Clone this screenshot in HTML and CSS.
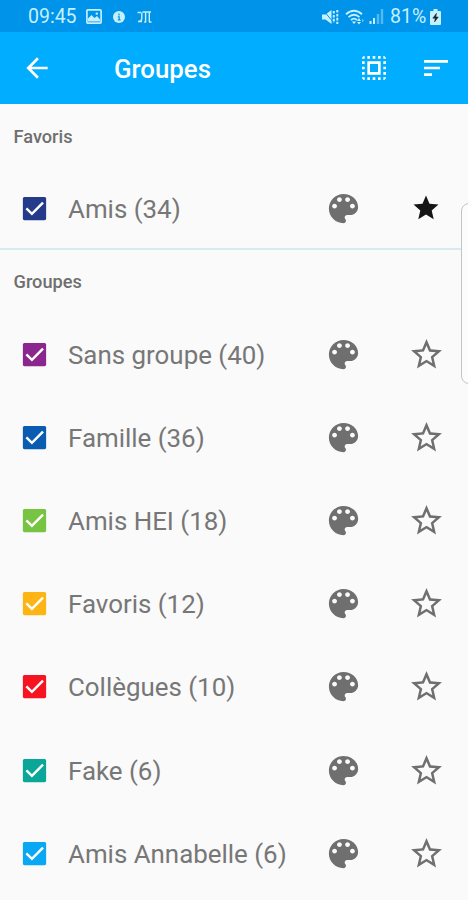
FILE: index.html
```html
<!DOCTYPE html>
<html lang="fr">
<head>
  <meta charset="UTF-8" />
  <meta name="viewport" content="width=device-width, initial-scale=1" />
  <title>Groupes</title>
  <link rel="stylesheet" href="styles.css">
</head>
<body>

  <!-- Shared icons -->
  <svg class="sprite" aria-hidden="true">
    <symbol id="check" viewBox="0 0 24 24">
      <rect x="3" y="3" width="18" height="18" rx="1.2" fill="currentColor" />
      <path d="M5.7 11.9l4.3 4.2 8.6-8.7" fill="none" stroke="#fff" stroke-width="1.9" />
    </symbol>
    <symbol id="palette" viewBox="0 0 24 24">
      <path fill="currentColor" d="M12 3c-4.97 0-9 4.03-9 9s4.03 9 9 9c.83 0 1.5-.67 1.5-1.5 0-.39-.15-.74-.39-1.01-.23-.26-.38-.61-.38-.99 0-.83.67-1.5 1.5-1.5H16c2.76 0 5-2.24 5-5 0-4.42-4.03-8-9-8zm-5.5 9c-.83 0-1.5-.67-1.5-1.5S5.67 9 6.5 9 8 9.67 8 10.5 7.33 12 6.5 12zm3-4C8.67 8 8 7.33 8 6.5S8.67 5 9.5 5s1.5.67 1.5 1.5S10.33 8 9.5 8zm5 0c-.83 0-1.5-.67-1.5-1.5S13.67 5 14.5 5s1.5.67 1.5 1.5S15.33 8 14.5 8zm3 4c-.83 0-1.5-.67-1.5-1.5S16.67 9 17.5 9s1.5.67 1.5 1.5-.67 1.5-1.5 1.5z" />
    </symbol>
    <symbol id="star" viewBox="0 0 24 24">
      <path fill="currentColor" d="M12 17.27L18.18 21l-1.64-7.03L22 9.24l-7.19-.61L12 2 9.19 8.63 2 9.24l5.46 4.73L5.82 21z" />
    </symbol>
    <symbol id="star-border" viewBox="0 0 24 24">
      <path fill="currentColor" d="M22 9.24l-7.19-.62L12 2 9.19 8.63 2 9.24l5.46 4.73L5.82 21 12 17.27 18.18 21l-1.63-7.03L22 9.24zM12 15.4l-3.76 2.27 1-4.28-3.32-2.88 4.38-.38L12 6.1l1.71 4.04 4.38.38-3.32 2.88 1 4.28L12 15.4z" />
    </symbol>
  </svg>

  <header>
    <div class="status-bar">
      <span class="clock">09:45</span>
      <svg class="picture-icon" viewBox="0 0 16 15" width="16" height="15">
        <rect x=".9" y=".9" width="14.2" height="13.2" rx="1" fill="none" stroke="currentColor" stroke-width="1.7" />
        <path d="M2 12.5V9.5L5.5 6l3 3L11 7l3 3.5v2z" fill="currentColor" />
        <circle cx="10.8" cy="4.6" r="1.2" fill="currentColor" />
      </svg>
      <svg class="info-icon" viewBox="0 0 12 12" width="12" height="12">
        <circle cx="6" cy="6" r="6" fill="currentColor" />
        <path d="M6 2.5v2M4.8 5.8h1.4v3M4.8 8.8h2.7" fill="none" stroke="#0093ea" stroke-width="1.2" />
      </svg>
      <svg class="m-icon" viewBox="0 0 15 12" width="15" height="12">
        <path d="M.5 1.5H4M5.5 1H14M4.8 1.5v6q0 3-3.3 3M1 10.5h4M8.6 1.5V11M12.3 1.5V11M7.2 11h2M12 11h2.5" fill="none" stroke="currentColor" stroke-width="1.4" />
      </svg>

      <svg class="mute-icon" viewBox="0 0 17 16" width="17" height="16">
        <path d="M0 5.5h3.5L9.5 1v14l-6-4.5H0z" fill="currentColor" />
        <path d="M1 1l11 13" stroke="#0093ea" stroke-width="1" />
        <path d="M11.8 2v12M15.3 1v14" stroke="currentColor" stroke-width="2" stroke-dasharray="2.6 1.3" />
      </svg>
      <svg class="wifi-icon" viewBox="0 0 20 16" width="20" height="16">
        <path d="M1 5.3q8-7 16 0M3.5 8.2q5.500-5 11 0M6 11q3-2.800 6 0" fill="none" stroke="currentColor" stroke-width="1.8" />
        <path d="M6.8 12.5h4.400L9 15z" fill="currentColor" />
        <path d="M12 12l2-3 2 3zM12 13h4l-2 2.500z" fill="currentColor" />
        <path d="M17 9.500l2 2-2 2z" fill="currentColor" opacity=".5" />
      </svg>
      <svg class="signal-icon" viewBox="0 0 15 15" width="15" height="15">
        <path d="M1.500 12v3M5 9v6" stroke="currentColor" stroke-width="2" />
        <path d="M9 5v10M13 0v15" stroke="currentColor" stroke-width="2.4" opacity=".42" />
      </svg>
      <span class="battery-level">81%</span>
      <svg class="battery-icon" viewBox="0 0 11 16" width="11" height="16">
        <path d="M3.500 0h4v2H10q1 0 1 1v12q0 1-1 1H1q-1 0-1-1V3q0-1 1-1h2.500z" fill="currentColor" />
        <path d="M6.500 4.300L2.800 9.200h2.500l-.8 3.800 3.800-5H5.800z" fill="#123" stroke="#123" stroke-width=".5" />
      </svg>
    </div>

    <div class="toolbar">
      <svg class="back" viewBox="0 0 24 24">
        <path fill="currentColor" d="M20 11H7.830l5.590-5.590L12 4l-8 8 8 8 1.410-1.410L7.830 13H20v-2z" />
      </svg>
      <h1>Groupes</h1>
      <svg class="select-all" viewBox="0 0 24 24">
        <path fill="currentColor" d="M3 5h2V3c-1.100 0-2 .9-2 2zm0 8h2v-2H3v2zm4 8h2v-2H7v2zM3 9h2V7H3v2zm10-6h-2v2h2V3zm6 0v2h2c0-1.100-.9-2-2-2zM5 21v-2H3c0 1.100.9 2 2 2zm-2-4h2v-2H3v2zM9 3H7v2h2V3zm2 18h2v-2h-2v2zm8-8h2v-2h-2v2zm0 8c1.100 0 2-.9 2-2h-2v2zm0-12h2V7h-2v2zm0 8h2v-2h-2v2zm-4 4h2v-2h-2v2zm0-16h2V3h-2v2zM7 17h10V7H7v10zm2-8h6v6H9V9z" />
      </svg>
      <svg class="sort" viewBox="0 0 24 24">
        <path fill="currentColor" d="M3 18h6v-2H3v2zM3 6v2h18V6H3zm0 7h12v-2H3v2z" />
      </svg>
    </div>
  </header>

  <main>
    <section class="favorites">
      <h2>Favoris</h2>
      <div class="row">
        <svg class="check navy"><use href="#check" /></svg>
        <span class="name">Amis (34)</span>
        <svg class="palette"><use href="#palette" /></svg>
        <svg class="star filled"><use href="#star" /></svg>
      </div>
    </section>

    <section class="groups">
      <h2>Groupes</h2>
      <div class="row">
        <svg class="check purple"><use href="#check" /></svg>
        <span class="name">Sans groupe (40)</span>
        <svg class="palette"><use href="#palette" /></svg>
        <svg class="star"><use href="#star-border" /></svg>
      </div>
      <div class="row">
        <svg class="check blue"><use href="#check" /></svg>
        <span class="name">Famille (36)</span>
        <svg class="palette"><use href="#palette" /></svg>
        <svg class="star"><use href="#star-border" /></svg>
      </div>
      <div class="row">
        <svg class="check green"><use href="#check" /></svg>
        <span class="name">Amis HEI (18)</span>
        <svg class="palette"><use href="#palette" /></svg>
        <svg class="star"><use href="#star-border" /></svg>
      </div>
      <div class="row">
        <svg class="check amber"><use href="#check" /></svg>
        <span class="name">Favoris (12)</span>
        <svg class="palette"><use href="#palette" /></svg>
        <svg class="star"><use href="#star-border" /></svg>
      </div>
      <div class="row">
        <svg class="check red"><use href="#check" /></svg>
        <span class="name">Collègues (10)</span>
        <svg class="palette"><use href="#palette" /></svg>
        <svg class="star"><use href="#star-border" /></svg>
      </div>
      <div class="row">
        <svg class="check teal"><use href="#check" /></svg>
        <span class="name">Fake (6)</span>
        <svg class="palette"><use href="#palette" /></svg>
        <svg class="star"><use href="#star-border" /></svg>
      </div>
      <div class="row">
        <svg class="check sky"><use href="#check" /></svg>
        <span class="name">Amis Annabelle (6)</span>
        <svg class="palette"><use href="#palette" /></svg>
        <svg class="star"><use href="#star-border" /></svg>
      </div>
    </section>
  </main>

  <!-- Edge panel handle -->
  <div class="edge-handle"></div>

</body>
</html>
```

FILE: styles.css
```css
/* Reset and base */
* {
  box-sizing: border-box;
}
body {
  margin: 0;
  height: 900px;
  position: relative;
  overflow: hidden;
  font-family: Roboto, sans-serif;
  background: #fafafa;
  color: #6f6f6f;
}
svg {
  display: block;
  flex: none;
}
h1, h2 {
  margin: 0;
}
.sprite {
  display: none;
}

/* Status bar */
.status-bar {
  display: flex;
  align-items: center;
  height: 32px;
  padding: 1px 27px 0 28px;
  background: #0093ea;
  color: #c4f0ff;
  font-size: 19.5px;
}
.clock {
  width: 58px;
}
.info-icon {
  margin-left: 11px;
}
.m-icon {
  margin-left: 12px;
}
.mute-icon {
  margin-left: auto;
}
.wifi-icon {
  margin-left: 6px;
}
.signal-icon {
  margin-left: 4px;
}
.battery-level {
  width: 40px;
  margin-left: 6px;
}

/* Toolbar */
.toolbar {
  display: flex;
  align-items: center;
  height: 72px;
  padding: 0 16px 0 21px;
  background: #00adff;
  color: #fff;
}
.toolbar svg {
  width: 32px;
  height: 32px;
}
.toolbar h1 {
  flex: 1;
  padding: 2px 0 0 61px;
  font-size: 25.8px;
  font-weight: 500;
}
.toolbar .sort {
  margin-left: 30px;
}

/* Sections */
h2 {
  height: 62.5px;
  padding: 2px 0 0 13.5px;
  font-size: 18.2px;
  font-weight: 500;
  line-height: 62px;
}
.favorites {
  height: 146px;
  border-bottom: 2px solid #d5eaf1;
}
.groups h2 {
  padding-top: 1px;
}
.row {
  display: flex;
  align-items: center;
  height: 83.2px;
  padding: 0 23px 0 19px;
}
.name {
  flex: 1;
  padding: 1px 0 0 18px;
  font-size: 25.9px;
  color: #777;
}
.check {
  width: 31px;
  height: 31px;
}
.palette {
  width: 39px;
  height: 39px;
}
.star {
  width: 37px;
  height: 37px;
  margin-left: 45px;
}
.star.filled {
  width: 30px;
  height: 30px;
  margin: 0 4px 0 48px;
  color: #151515;
}

/* Group colors */
.navy { color: #243a8b; }
.purple { color: #8c268f; }
.blue { color: #0a5cb0; }
.green { color: #76c442; }
.amber { color: #fdb515; }
.red { color: #f5141f; }
.teal { color: #0aa697; }
.sky { color: #0aa8f2; }

.edge-handle {
  position: absolute;
  top: 203px;
  right: -12px;
  width: 19px;
  height: 181px;
  border: 1px solid #c4c4c4;
  border-radius: 8px;
  background: #fcfcfc;
}
```
